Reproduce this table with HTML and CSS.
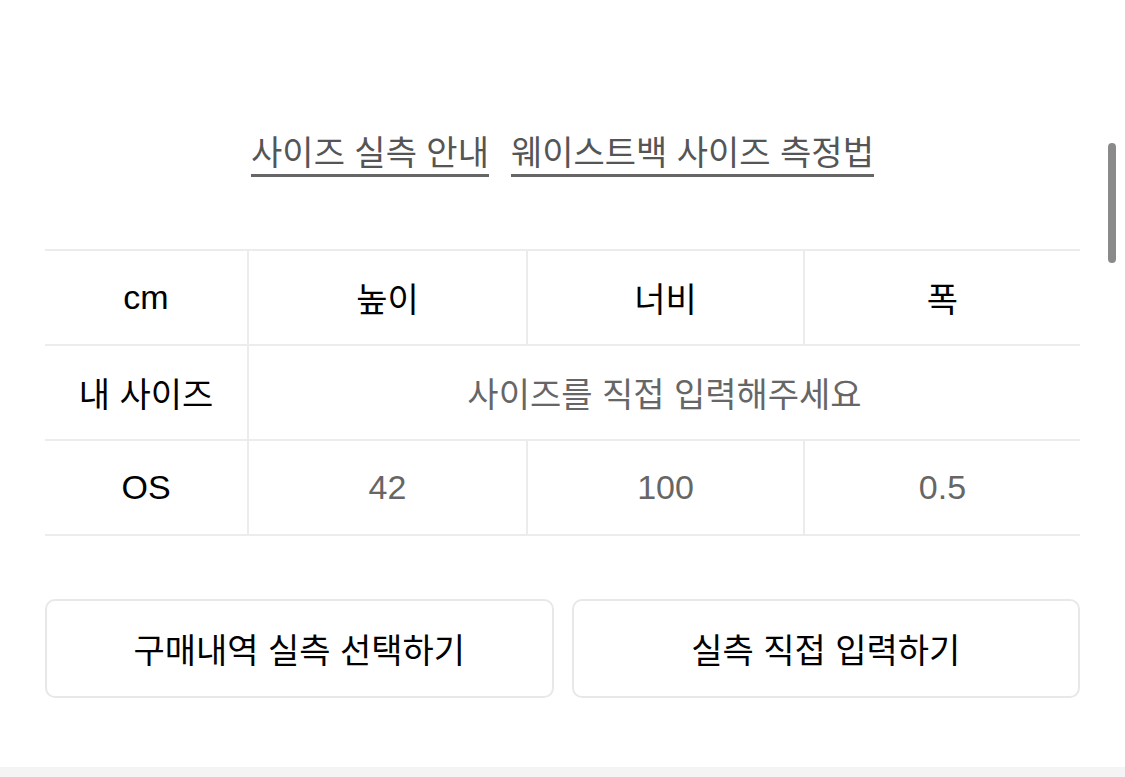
FILE: index.html
```html
<!DOCTYPE html>
<html lang="ko">
<head>
<meta charset="utf-8">
<link rel="stylesheet" href="styles.css">
</head>
<body>
<div class="page">
  <div class="links">
    <a class="link">사이즈 실측 안내</a>
    <a class="link">웨이스트백 사이즈 측정법</a>
  </div>
  <div class="table">
    <div class="cell head">cm</div>
    <div class="cell">높이</div>
    <div class="cell">너비</div>
    <div class="cell">폭</div>
    <div class="cell head">내 사이즈</div>
    <div class="cell span val">사이즈를 직접 입력해주세요</div>
    <div class="cell head">OS</div>
    <div class="cell val">42</div>
    <div class="cell val">100</div>
    <div class="cell val">0.5</div>
  </div>
  <div class="buttons">
    <button class="btn">구매내역 실측 선택하기</button>
    <button class="btn">실측 직접 입력하기</button>
  </div>
</div>
<div class="bottom"></div>
<div class="scrollbar"></div>
</body>
</html>
```

FILE: styles.css
```css
html, body {
  margin: 0;
  padding: 0;
  background: #fff;
}
body {
  width: 1125px;
  height: 777px;
  overflow: hidden;
  position: relative;
  font-family: "Liberation Sans", "Noto Sans CJK KR", sans-serif;
  color: #000;
}
.page {
  padding: 0 45px;
  height: 767px;
  box-sizing: border-box;
  display: flex;
  flex-direction: column;
}
.page > * {
  flex-shrink: 0;
}
.links {
  display: flex;
  justify-content: center;
  align-items: flex-start;
  gap: 22px;
  padding-top: 131px;
  height: 249px;
  box-sizing: border-box;
}
.link {
  font-size: 34px;
  line-height: 44px;
  height: 43px;
  color: #555;
  border-bottom: 3px solid #666;
}
.table {
  display: grid;
  grid-template-columns: 202px 279px 277px 277px;
  grid-auto-rows: 95px;
  border-top: 2px solid #ececec;
}
.cell {
  display: flex;
  align-items: center;
  justify-content: center;
  font-size: 34px;
  color: #000;
  border-bottom: 2px solid #ececec;
  border-left: 2px solid #ececec;
}
.cell.head {
  border-left: none;
}
.cell.span {
  grid-column: 2 / 5;
}
.cell.val {
  color: #666;
}
.buttons {
  display: flex;
  gap: 18px;
  margin-top: 63px;
}
.btn {
  flex: 1;
  height: 99px;
  background: #fff;
  border: 2px solid #e8e8e8;
  border-radius: 10px;
  font-family: "Liberation Sans", "Noto Sans CJK KR", sans-serif;
  font-size: 34px;
  color: #000;
  padding: 0;
}
.bottom {
  height: 10px;
  background: #f4f4f4;
}
.scrollbar {
  position: absolute;
  right: 9px;
  top: 143px;
  width: 8px;
  height: 120px;
  border-radius: 4px;
  background: #8a8a8a;
}
```
